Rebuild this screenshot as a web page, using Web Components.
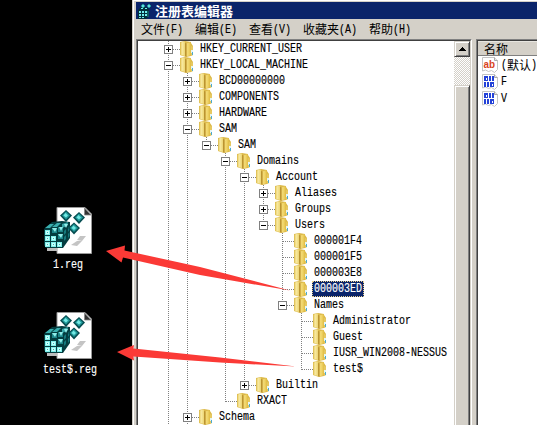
<!DOCTYPE html>
<html lang="zh">
<head>
<meta charset="utf-8">
<title>注册表编辑器</title>
<style>
html,body{margin:0;height:100%;overflow:hidden;background:#000}
</style>
</head>
<body>
<reg-screen></reg-screen>
<script>
const FONT = '"Liberation Mono","Noto Sans CJK SC",monospace';
const define = (name, html) => customElements.define(name, class extends HTMLElement {
  constructor() { super(); this.attachShadow({mode: 'open'}); }
  connectedCallback() {
    const t = document.createElement('template');
    t.innerHTML = typeof html === 'function' ? html(this) : html;
    this.shadowRoot.replaceChildren(t.content.cloneNode(true));
  }
});

/* Half-width text on a 6px character grid */
define('mono-text', el => `<style>
:host{display:block;width:${el.textContent.length * 6}px;height:16px;font:12px/16px ${FONT};white-space:pre;-webkit-text-stroke:.15px currentColor}
span{display:inline-block;transform:scaleX(.8333);transform-origin:0 0}
</style><span><slot></slot></span>`);

define('folder-icon', `<style>:host{display:block;width:14px;height:16px}svg{display:block}</style>
<svg width="14" height="16" viewBox="0 0 14 16">
<defs><linearGradient id="a" x1="0" x2="1"><stop offset="0" stop-color="#e6cc68"/><stop offset=".4" stop-color="#f8e9a0"/><stop offset="1" stop-color="#ecd573"/></linearGradient>
<linearGradient id="b" x1="0" x2="1"><stop offset="0" stop-color="#f3dc7c"/><stop offset=".5" stop-color="#f0d468"/><stop offset="1" stop-color="#dfbb42"/></linearGradient></defs>
<path d="M0 1l5-1 6 1v1l2 3v9l-2 1-5 1-6-2z" fill="#dcb94a"/>
<path d="M.5 1.500l4.500-1V15l-4.500-1z" fill="url(#a)"/>
<path d="M6.500 2.500l4.500-1.500v13l-4.500 1.500z" fill="url(#b)"/>
<path d="M5 2l1.500.5V16L5 15z" fill="#bb9431"/>
<path d="M11.500 5l1 .5V14l-1 .5z" fill="#f0d87a"/>
<path d="M11 9h2v3h-2z" fill="#e4f5f5"/><path d="M12 11h1v3h-1z" fill="#4ca9cf"/>
</svg>`);

define('tree-row', el => {
  const level = +el.getAttribute('level'), box = el.getAttribute('box'), guides = el.getAttribute('guides').split('').map(Number);
  let cells = '';
  for (let i = 0; i <= level; i++) {
    const own = i === level, last = own && el.hasAttribute('last');
    let s = '';
    if (guides.includes(i)) s += `<path d="M9.500 0V${last ? 9 : 16}"/>`;
    if (own) s += `<path d="M10 8.500H19"/>`;
    if (own && box) s += `<g stroke-dasharray="none"><rect x="5.500" y="4.500" width="8" height="8" fill="#fff"/><path d="M7 8.500h5${box === '+' ? 'M9.500 6v5' : ''}" stroke="#000"/></g>`;
    cells += `<svg width="19" height="16" fill="none" stroke="#808080" stroke-dasharray="1 1" shape-rendering="crispEdges">${s}</svg>`;
  }
  return `<style>
:host{display:flex;height:16px;padding-left:21px;color:#000}
svg{display:block;flex:none}
i{flex:none;width:2px;height:9px;background:linear-gradient(90deg,#fff 50%,#808080 50%) 0 100%/2px 1px no-repeat}
folder-icon{flex:none}
.t{margin-left:4px;padding:0 2px;height:16px;box-sizing:border-box}
:host([selected]) .t{background:#0a246a;color:#fff;outline:1px dotted #e8cf8a;outline-offset:-1px}
</style>${cells}<i></i><folder-icon></folder-icon><div class="t"><mono-text>${el.getAttribute('label')}</mono-text></div>`;
});

/* level, expander, label, levels whose guide line crosses the row, last child, selected */
const ROWS = [
 [0,'+','HKEY_CURRENT_USER','0'],[0,'-','HKEY_LOCAL_MACHINE','0'],
 [1,'+','BCD00000000','01'],[1,'+','COMPONENTS','01'],[1,'+','HARDWARE','01'],[1,'-','SAM','01'],
 [2,'-','SAM','012',1],[3,'-','Domains','013'],[4,'-','Account','0134'],
 [5,'+','Aliases','01345'],[5,'+','Groups','01345'],[5,'-','Users','01345',1],
 [6,'','000001F4','01346'],[6,'','000001F5','01346'],[6,'','000003E8','01346'],[6,'','000003ED','01346',0,1],
 [6,'-','Names','01346',1],
 [7,'','Administrator','01347'],[7,'','Guest','01347'],[7,'','IUSR_WIN2008-NESSUS','01347'],[7,'','test$','01347',1],
 [4,'+','Builtin','0134',1],[3,'','RXACT','013',1],[1,'+','Schema','01']];

define('reg-tree', () => `<style>:host{display:block;background:#fff;overflow:hidden}</style>` +
  ROWS.map(r => `<tree-row level="${r[0]}" box="${r[1]}" label="${r[2]}" guides="${r[3]}"${r[4] ? ' last' : ''}${r[5] ? ' selected' : ''}></tree-row>`).join(''));

define('scroll-bar', `<style>
:host{display:flex;flex-direction:column;width:16px;background:repeating-conic-gradient(#fff 0 25%,#d4d0c8 0 50%) 0 0/2px 2px}
.b{box-sizing:border-box;background:#d4d0c8;border:1px solid;border-color:#d4d0c8 #404040 #404040 #d4d0c8;box-shadow:inset 1px 1px #fff,inset -1px -1px #808080}
.up{height:16px;display:grid;place-items:center}
.thumb{margin-top:28px;flex:1;border-bottom:0;box-shadow:inset 1px 1px #fff,inset -1px 0 #808080}
</style><div class="b up"><svg width="7" height="4" shape-rendering="crispEdges"><path d="M3 0h1v1h1v1h1v1h1v1H0V3h1V2h1V1h1z"/></svg></div><div class="b thumb"></div>`);

define('value-icon', el => `<style>:host{display:block;flex:none;width:16px;height:16px;white-space:normal}svg{display:block}text{font-family:"Liberation Sans",sans-serif;font-weight:bold}</style>
<svg width="16" height="16"><path d="M.5.5h12l3 3v9l-3 3-3-2-3 1-3-1.500-3 1z" fill="#fff" stroke="#c4c4c4"/><path d="M12.500.5v3h3" fill="#e8e8e8" stroke="#aaa"/>` +
 (el.getAttribute('kind') === 'ab'
 ? `<text x="1.500" y="10.500" font-size="10.500" textLength="11.500" lengthAdjust="spacingAndGlyphs" fill="#d8431c">ab</text>`
 : `<g fill="#2442d8" shape-rendering="crispEdges"><path fill-rule="evenodd" d="M2 2h4v5H2zM3.500 3.500v2h1v-2zM8 8h4v5H8zM9.500 9.500v2h1v-2z"/><path d="M7 2h2v5H7zM10 2h2v5h-2zM2 8h2v5H2zM5 8h2v5H5z"/></g>`) + `</svg>`);

define('value-row', el => `<style>:host{display:flex;height:17px;align-items:center;font:12px/16px "Noto Sans CJK SC",sans-serif;color:#000;white-space:pre}
div{display:flex;margin-left:3px}</style><value-icon kind="${el.getAttribute('kind')}"></value-icon><div><slot></slot></div>`);

define('value-list', `<style>
:host{display:block;background:#fff}
header{height:15px;box-sizing:border-box;background:#d4d0c8;border-bottom:1px solid #808080;box-shadow:inset 0 1px #e8e6e0;padding-left:6px;font:12px/15px "Noto Sans CJK SC",sans-serif;color:#000}
section{padding:0 0 0 4px}
</style><header>名称</header><section>
<value-row kind="ab"><mono-text>(</mono-text><span>默认</span><mono-text>)</mono-text></value-row>
<value-row kind="bin"><mono-text>F</mono-text></value-row>
<value-row kind="bin"><mono-text>V</mono-text></value-row></section>`);

/* Cluster of teal cubes, drawn on a 27x28 grid */
const face = (x, y) => `<rect x="${x}" y="${y}" width="5" height="5" fill="#7deeea"/><path d="M${x+1} ${y+1}h3v3h-3z" fill="#c8fffb"/><path d="M${x+2} ${y+2}h1v1h-1z" fill="#36b8b8"/>`;
const dia = (x, y) => `<path d="M${x} ${y-6}l6 5.500-6 6.500-6-6.500z" fill="#064c50"/><path d="M${x} ${y-4.500}l4 4-4 4-4-4z" fill="#239c9c"/><path d="M${x-.5} ${y-3}l2.500 2.500-2 2-2.500-2z" fill="#74e9e4"/>`;
const cubes = `<path d="M0 9l8-7 10-1 8 1v16l-7 10H2l-2-3z" fill="#043d40"/>
<path d="M1 8l5-4h4l-4 4zM8 7l5-4h4l-4 4z" fill="#3aaeae"/><path d="M18 4l6-2-1 4-5 2z" fill="#36a4a6"/>
<path d="M20 11l2-2v4l-2 2zM20 17l2-2v4l-2 2zM24 8l1.500-2v4L24 12zM24 14l1.500-2v4L24 18z" fill="#15777b"/>
<path d="M8 8h5v5H8zM14 14h5v5h-5zM14 7h5v5h-5z" fill="#1c8488"/><path d="M8 8h5l-2 4zM14 14h5l-2 4zM15 7h4l-2 4zM20 4h4l-2 4z" fill="#91ede9"/>` +
 face(1,10)+face(1,16)+face(1,22)+face(7,16)+face(7,22)+face(13,22);

define('desktop-file', el => `<style>:host{display:flex;flex-direction:column;width:52px;height:66px;color:#fff}svg{display:block;flex:none}
mono-text{align-self:center;margin-top:2px}:host([name="1.reg"]) mono-text{margin-right:4px}</style>` +
 `<svg width="50" height="48" viewBox="0 0 50 48">
<path d="M13 .5H41L47.500 7V46.500H13z" fill="#fff" stroke="#999"/>
<path d="M40.500 1v7h6.500z" fill="#333" stroke="#888" stroke-width=".8"/>
<path d="M27 38l6-4h5l-5 5zM33 33l3-4h6l-4 5z" fill="#c4c4c4"/><path d="M3 41h10v3H3z" fill="#bbb"/>
<g transform="translate(0 13)">${cubes}</g>${dia(22,9)}${dia(35,11)}${dia(30,21.500)}</svg><mono-text>${el.getAttribute('name')}</mono-text>`);

define('reg-window', `<style>
:host{display:flex;flex-direction:column;box-sizing:border-box;background:#d4d0c8;padding:2px 0 0 4px;box-shadow:inset 1px 0 #d4d0c8,inset 2px 1px #fff;font-family:"Noto Sans CJK SC",sans-serif}
.title{height:17px;flex:none;background:#0a246a;color:#fff;display:flex;align-items:center;gap:3px;padding-left:2px;font-weight:bold;font-size:13px;line-height:17px}
nav{height:20px;flex:none;display:flex;gap:12px;align-items:center;padding-left:5px;color:#000}
nav div{display:flex;font-size:12px;line-height:16px;white-space:nowrap}
nav mono-text{margin-top:1px}
.panes{flex:1;min-height:0;display:flex;gap:4px}
.pane{display:flex;border:solid #808080;border-width:1px 0 0 1px;box-sizing:border-box;min-width:0}
.inner{display:flex;flex:1;min-width:0;border:solid #404040;border-width:1px 0 0 1px}
.left{width:336px;flex:none;border-right:1px solid #fff}.left .inner{border-right:1px solid #d4d0c8}
.right{flex:1}
reg-tree,value-list{flex:1;min-width:0}
</style>
<div class="title"><svg width="14" height="16" viewBox="0 0 14 16"><path d="M0 7l3-3h5l3 2v7l-3 3H0z" fill="#032f3b"/><path d="M1 8h2v2H1zM4 8h2v2H4zM7 8h2v2H7zM1 11h2v2H1zM4 11h2v2H4zM7 11h2v2H7zM1 14h2v1H1zM4 14h2v1H4zM3 5h2v1H3zM7 5h2v1H7z" fill="#70eeee"/><path d="M10 8v6M5 1l2 2-2 2-2-2zM11 1l2 2-2 2-2-2z" stroke="#19999a" fill="#62dddd" stroke-width=".8"/></svg><span>注册表编辑器</span></div>
<nav><div>文件<mono-text>(F)</mono-text></div><div>编辑<mono-text>(E)</mono-text></div><div>查看<mono-text>(V)</mono-text></div><div>收藏夹<mono-text>(A)</mono-text></div><div>帮助<mono-text>(H)</mono-text></div></nav>
<div class="panes"><div class="pane left"><div class="inner"><reg-tree></reg-tree><scroll-bar></scroll-bar></div></div><div class="pane right"><div class="inner"><value-list></value-list></div></div></div>`);

define('red-arrows', `<style>:host{display:block;pointer-events:none}svg{display:block}</style>
<svg width="537" height="425" fill="#fb3a36"><path d="M106 251L125 245.500 124.500 250.500 200 267 290 290.500 200 275 123 257.500 121.500 262.500z"/><path d="M117 352L134 345 133.500 348.500 220 357.500 296 366.500 220 362.500 133.500 356.500 134 360.500z"/></svg>`);

define('reg-screen', `<style>
:host{display:flex;position:relative;width:537px;height:425px;background:#000;overflow:hidden}
aside{width:132px;flex:none;box-sizing:border-box;padding:207px 0 0 44px;display:flex;flex-direction:column;gap:39px}
reg-window{flex:1;min-width:0}
red-arrows{position:absolute;inset:0}
</style><aside><desktop-file name="1.reg"></desktop-file><desktop-file name="test$.reg"></desktop-file></aside><reg-window></reg-window><red-arrows></red-arrows>`);
</script>
</body>
</html>
